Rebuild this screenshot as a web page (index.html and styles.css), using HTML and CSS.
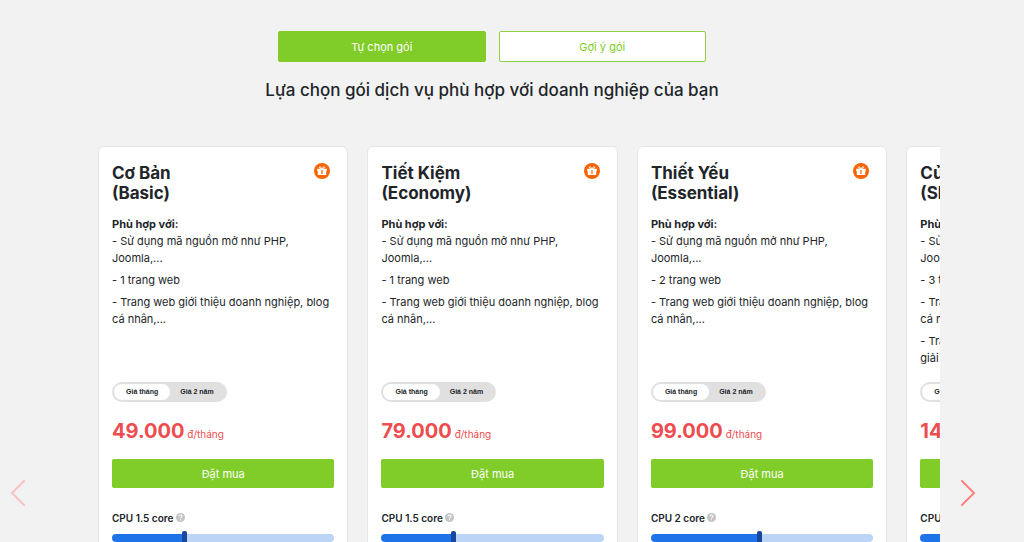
FILE: index.html
```html
<!DOCTYPE html>
<html lang="vi">
<head>
    <meta charset="UTF-8">
    <meta name="viewport" content="width=device-width, initial-scale=1.0">
    <title>Lựa chọn gói dịch vụ</title>
    <link rel="stylesheet" href="styles.css">
</head>
<body>

<div class="intro">
    <div class="tabs">
        <button type="button" class="tab active">Tự chọn gói</button>
        <button type="button" class="tab">Gợi ý gói</button>
    </div>
    <h1>Lựa chọn gói dịch vụ phù hợp với doanh nghiệp của bạn</h1>
</div>

<div class="carousel">
    <button type="button" class="arrow prev" aria-label="Trước">
        <svg width="16" height="28" viewBox="0 0 16 28"><path d="M14 2 L2 14 L14 26"/></svg>
    </button>
    <div class="viewport">
        <div class="track" id="planList">
            <!-- Plan cards will be inserted here -->
        </div>
    </div>
    <button type="button" class="arrow next" aria-label="Sau">
        <svg width="16" height="28" viewBox="0 0 16 28"><path d="M2 2 L14 14 L2 26"/></svg>
    </button>
</div>

<script>
    const source = '- Sử dụng mã nguồn mở như PHP, Joomla,...';
    const intro = '- Trang web giới thiệu doanh nghiệp, blog cá nhân,...';

    const plans = [
        { name: 'Cơ Bản', sub: '(Basic)', uses: [source, '- 1 trang web', intro], price: '49.000', cpu: '1.5', level: 32 },
        { name: 'Tiết Kiệm', sub: '(Economy)', uses: [source, '- 1 trang web', intro], price: '79.000', cpu: '1.5', level: 32 },
        { name: 'Thiết Yếu', sub: '(Essential)', uses: [source, '- 2 trang web', intro], price: '99.000', cpu: '2', level: 49 },
        { name: 'Của Hàng', sub: '(Shop)', uses: [source, '- 3 trang web', intro, '- Trang web thương mại, tin tức, diễn đàn, giải trí'], price: '149.000', cpu: '2', level: 49 }
    ];

    const giftIcon = `
        <svg class="gift" width="16" height="16" viewBox="0 0 16 16" aria-hidden="true">
            <circle cx="8" cy="8" r="8" fill="#f96302"/>
            <path d="M3.2 5.8h9.6v2.4H3.2zM3.8 8h8.4v3.9H3.8z" fill="#fff"/>
            <path d="M7.8 5.8C5.2 5.8 4.7 3.8 6 3.8c1 0 1.5 1 1.8 2zM8.2 5.8c2.6 0 3.1-2 1.8-2-1 0-1.5 1-1.8 2z" fill="none" stroke="#fff"/>
            <path d="M8 7v4" stroke="#f96302" stroke-width="1.2"/>
        </svg>`;

    const helpIcon = `
        <svg class="help" width="9" height="9" viewBox="0 0 16 16" aria-hidden="true">
            <circle cx="8" cy="8" r="8" fill="#c4c4c4"/>
            <path d="M5.4 6.2C5.4 2.8 10.8 3 10.6 6.2 10.5 7.9 8 7.9 8 9.8M8 11.2v1.8" fill="none" stroke="#fff" stroke-width="1.8"/>
        </svg>`;

    function createPlan(plan, i) {
        const slide = document.createElement('div');
        slide.classList.add('slide');
        slide.innerHTML = `
            <div class="card">
                <div class="card-head">
                    <h2>${plan.name}<br>${plan.sub}</h2>
                    ${giftIcon}
                </div>
                <div class="uses">
                    <strong>Phù hợp với:</strong>
                    ${plan.uses.map(use => `<p>${use}</p>`).join('')}
                </div>
                <div class="term">
                    <input type="radio" name="term${i}" id="month${i}" checked>
                    <label for="month${i}">Giá tháng</label>
                    <input type="radio" name="term${i}" id="years${i}">
                    <label for="years${i}">Giá 2 năm</label>
                </div>
                <div class="price"><b>${plan.price}</b> đ/tháng</div>
                <button type="button" class="buy">Đặt mua</button>
                <label class="spec" for="cpu${i}">CPU ${plan.cpu} core ${helpIcon}</label>
                <input type="range" class="slider" id="cpu${i}" value="${plan.level}" style="--level: ${plan.level}%">
            </div>`;
        return slide;
    }

    const planList = document.getElementById('planList');
    plans.forEach((plan, i) => planList.appendChild(createPlan(plan, i)));

    planList.addEventListener('input', e => {
        if (e.target.classList.contains('slider')) {
            e.target.style.setProperty('--level', e.target.value + '%');
        }
    });
</script>

</body>
</html>
```

FILE: styles.css
```css
* {
    box-sizing: border-box;
}

html {
    scrollbar-width: none;
}

body {
    font-family: Inter, sans-serif;
    font-size: 11px;
    line-height: 17px;
    color: #212529;
    background-color: #f2f2f2;
    margin: 0;
    overflow-x: hidden;
}

button {
    font-family: inherit;
    cursor: pointer;
}

.intro {
    margin-right: 40px;
    padding-top: 31px;
    text-align: center;
}

.tabs {
    display: flex;
    gap: 13px;
    width: 428px;
    max-width: 100%;
    margin: 0 auto;
}

.tab {
    flex: 1;
    height: 31px;
    font-size: 11px;
    color: #80cc28;
    background-color: #fff;
    border: 1px solid #8fd142;
    border-radius: 2px;
}

.tab.active {
    color: #fff;
    background-color: #80cc28;
    border-color: #80cc28;
}

h1 {
    font-size: 17px;
    line-height: 24px;
    font-weight: 500;
    margin: 16px 0 0;
}

.carousel {
    display: flex;
    align-items: center;
    justify-content: space-between;
    margin-top: 44px;
    padding: 0 48px 0 10px;
}

.arrow {
    display: flex;
    padding: 0;
    border: 0;
    background: none;
}

.arrow path {
    fill: none;
    stroke: #ff7f7f;
    stroke-width: 2;
    stroke-linecap: round;
}

.prev {
    opacity: 0.4;
}

.viewport {
    flex: 1;
    margin: 0 20px 0 72px;
    min-height: 694px;
    display: flex;
    overflow: hidden;
}

.track {
    display: flex;
    width: 100%;
}

.slide {
    display: flex;
    flex: 0 0 32%;
    padding-right: 19px;
}

.card {
    width: 100%;
    padding: 16px 13px;
    background-color: #fff;
    border: 1px solid #e6e6e6;
    border-radius: 6px;
}

.card-head {
    display: flex;
    justify-content: space-between;
    align-items: flex-start;
    padding-right: 4px;
}

h2 {
    font-size: 17px;
    line-height: 20px;
    font-weight: 700;
    margin: 0;
}

.uses {
    min-height: 166px;
    margin-top: 13px;
}

.uses p {
    margin: 0 0 5px;
}

.term {
    display: inline-flex;
    padding: 2px;
    border-radius: 10px;
    background-color: #e0e0e0;
}

.term input {
    position: absolute;
    opacity: 0;
}

.term label {
    padding: 0 11px 0 10px;
    font-family: "Liberation Sans", sans-serif;
    font-size: 7px;
    line-height: 16px;
    font-weight: 700;
    border-radius: 8px;
    cursor: pointer;
}

.term label:first-of-type {
    padding: 0 12px;
}

.term input:checked + label {
    background-color: #fff;
}

.price {
    margin-top: 15px;
    font-size: 10px;
    line-height: 28px;
    color: #ee4d50;
}

.price b {
    font-size: 20px;
    font-weight: 700;
}

.buy {
    display: block;
    width: 100%;
    height: 29px;
    margin: 11px 0 22px;
    font-size: 11px;
    color: #fff;
    background-color: #80cc28;
    border: 0;
    border-radius: 2px;
}

.spec {
    display: block;
    font-size: 10px;
    font-weight: 600;
}

.slider {
    appearance: none;
    display: block;
    width: 100%;
    height: 14px;
    margin: 4px 0 0;
    background: none;
}

.slider::-webkit-slider-runnable-track {
    height: 8px;
    border-radius: 4px;
    background: linear-gradient(to right, #1f73e8 var(--level), #bcd5f7 var(--level));
}

.slider::-webkit-slider-thumb {
    appearance: none;
    width: 5px;
    height: 14px;
    margin-top: -3px;
    border-radius: 2px;
    background-color: #17479e;
}
```
